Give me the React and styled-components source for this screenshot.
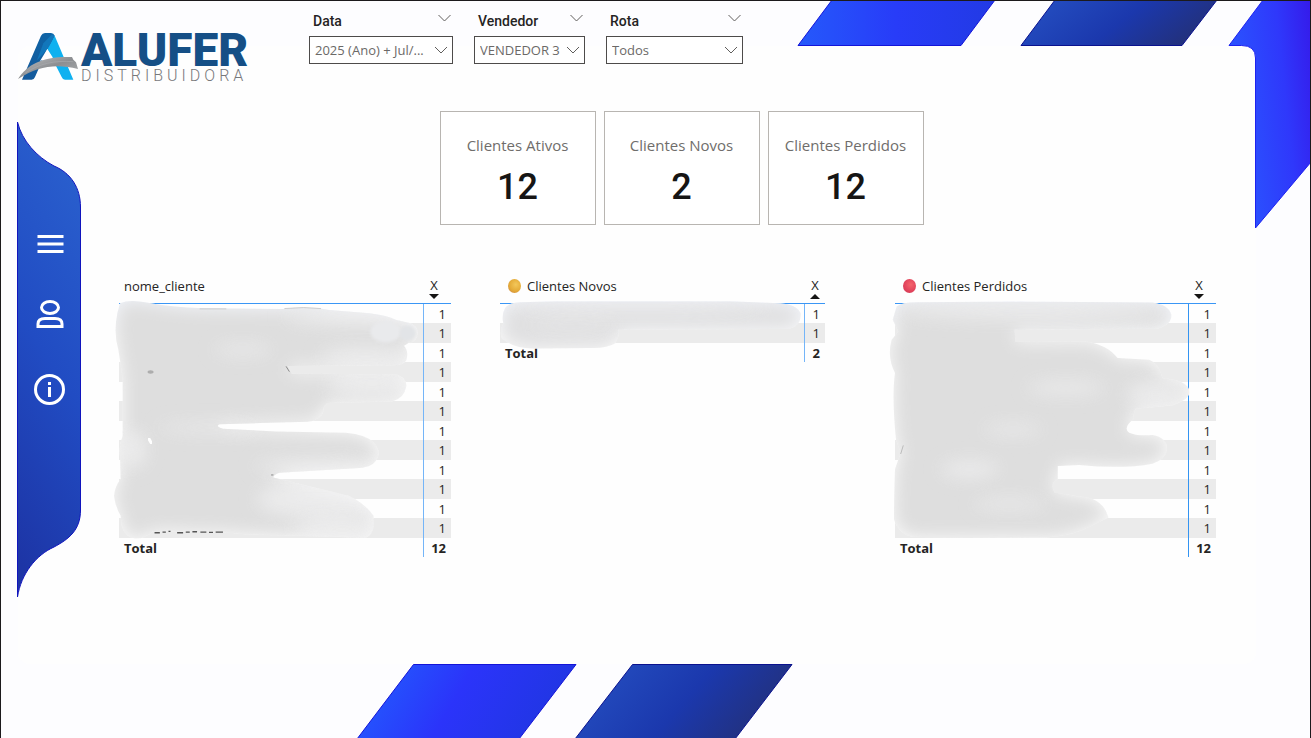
import React from "react";
import styled, { createGlobalStyle } from "styled-components";

const GlobalStyle = createGlobalStyle`
  *, *::before, *::after { box-sizing: border-box; }
  body {
    margin: 0;
    background: #fdfdff;
    color: #252423;
    font-family: "Open Sans", "Noto Sans", sans-serif;
  }
  button { font: inherit; color: inherit; background: none; border: 0; padding: 0; cursor: pointer; }
`;

const Page = styled.div`
  display: grid;
  min-height: 100vh;
  border: 1px solid #1c1a1c;
  border-bottom: 0;
  > * { grid-area: 1 / 1; min-width: 0; }
`;

const Sheet = styled.div`
  margin: 45px 54px 74px 17px;
  border-radius: 12px;
  background: #fefefe;
`;

const Backdrop = styled.div`
  display: flex;
  flex-direction: column;
  justify-content: space-between;
  overflow: hidden;
  svg { display: block; flex: none; }
`;

const TopShapes = styled.svg`
  align-self: flex-end;
`;

const BottomShapes = styled.svg`
  margin-left: 27%;
`;

const Content = styled.div`
  display: flex;
  flex-direction: column;
`;

const Header = styled.header`
  display: flex;
  align-items: flex-start;
  gap: 62px;
  height: 110px;
  padding: 11px 0 0 17px;
`;

const Logo = styled.div`
  display: flex;
  align-items: flex-start;
  width: 229px;
  padding-top: 19px;
  svg { display: block; flex: none; }
`;

const LogoText = styled.div`
  display: flex;
  flex-direction: column;
  margin-left: 1px;
  font-family: Roboto, sans-serif;
`;

const Brand = styled.span`
  color: #154f86;
  font-size: 46px;
  font-weight: 900;
  line-height: 38px;
`;

const BrandSub = styled.span`
  color: #77787b;
  font-size: 16px;
  font-weight: 300;
  line-height: 14px;
  letter-spacing: 4px;
`;

const Filters = styled.div`
  display: flex;
  gap: 21px;
`;

const Filter = styled.div`
  display: flex;
  flex-direction: column;
  gap: 6px;
  width: ${(p) => p.$width}px;
`;

const FilterHead = styled.div`
  display: flex;
  justify-content: space-between;
  height: 18px;
  padding: 0 2px 0 4px;
  button { display: flex; padding-top: 2px; }
`;

const FilterLabel = styled.label`
  font-family: Roboto, sans-serif;
  font-size: 14px;
  font-weight: 500;
  line-height: 18px;
`;

const SelectBox = styled.div`
  display: grid;
  align-items: center;
  > * { grid-area: 1 / 1; }
  svg { justify-self: end; margin-right: 5px; pointer-events: none; }
`;

const Select = styled.select`
  appearance: none;
  width: 100%;
  height: 28px;
  padding: 0 0 0 5px;
  border: 1px solid #4d4b4a;
  border-radius: 0;
  background: #fff;
  color: #6b6967;
  font-family: inherit;
  font-size: 13px;
`;

const Body = styled.div`
  display: flex;
  align-items: flex-start;
`;

const Sidebar = styled.nav`
  display: grid;
  flex: none;
  width: 64px;
  margin: 11px 0 0 16px;
  > * { grid-area: 1 / 1; }
  svg { display: block; }
`;

const SidebarLinks = styled.div`
  display: flex;
  flex-direction: column;
  align-items: center;
  gap: 41px;
  padding: 105px 0 0 2px;
`;

const Main = styled.main`
  flex: 1;
  min-width: 0;
  padding: 0 94px 0 38px;
`;

const Cards = styled.section`
  display: flex;
  justify-content: center;
  gap: 8px;
  padding-left: 28px;
`;

const Card = styled.article`
  display: flex;
  flex-direction: column;
  align-items: center;
  width: 156px;
  height: 114px;
  padding-top: 21px;
  border: 1px solid #b8b5b1;
  background: #fff;
`;

const CardTitle = styled.h2`
  margin: 0;
  color: #6f6d6b;
  font-size: 15px;
  font-weight: 400;
  line-height: 24px;
  white-space: nowrap;
`;

const CardValue = styled.p`
  margin: 10px 0 0;
  color: #161514;
  font-family: Roboto, sans-serif;
  font-size: 36px;
  font-weight: 500;
  line-height: 40px;
`;

const Tables = styled.section`
  display: grid;
  grid-template-columns: 381fr 395fr 321fr;
  align-items: start;
  padding-top: 51px;
`;

const TablePanel = styled.div`
  position: relative;
  max-width: ${(p) => p.$width}px;
`;

const Table = styled.table`
  width: 100%;
  table-layout: fixed;
  border-collapse: separate;
  border-spacing: 0;
  font-size: 13px;
  line-height: 18px;

  tr { height: 19px; }
  tbody tr:nth-child(even) { height: 20px; background: #ebebeb; }
  th, td { padding: 0 5px; text-align: left; font-weight: 400; }
  thead th { height: 28px; border-bottom: 1px solid #3a96f5; vertical-align: top; }
  tbody td:last-child, tfoot td {
    border-left: 1px solid ${(p) => p.$rule};
    text-align: right;
  }
  tfoot th, tfoot td { font-weight: 700; }
`;

const CountCol = styled.col`
  width: ${(p) => p.$width}px;
`;

const HeadLabel = styled.span`
  display: flex;
  align-items: center;
  gap: 6px;
  padding-left: ${(p) => (p.$dot ? 3 : 0)}px;
  line-height: 20px;
  font-size: 13px;
`;

const Dot = styled.i`
  width: 13px;
  height: 14px;
  border-radius: 50%;
  background: radial-gradient(circle at 60% 40%, ${(p) => p.$tones});
`;

const SortButton = styled.button`
  display: flex;
  flex-direction: column;
  align-items: center;
  margin-left: 1px;
  line-height: 18px;
  svg { display: block; }
`;

const Smudge = styled.svg`
  position: absolute;
  inset: 0;
  width: 100%;
  height: 100%;
  overflow: visible;
  pointer-events: none;
`;

function Chevron({ size = 13 }) {
  return (
    <svg width={size} height="8" viewBox="0 0 13 8" fill="none" stroke="#605e5c" aria-hidden="true">
      <path d="M.5 1 6.5 7l6-6" />
    </svg>
  );
}

function LogoMark() {
  return (
    <svg width="62" height="52" viewBox="54 93 186 156" role="img" aria-label="Alufer">
      <defs>
        <linearGradient id="markDark" x1="0" y1="1" x2="1" y2="0">
          <stop offset="0" stopColor="#15599a" />
          <stop offset="1" stopColor="#0d65a8" />
        </linearGradient>
        <linearGradient id="markSwoosh" x1="0" y1="0" x2="1" y2="1">
          <stop offset="0" stopColor="#c3c4c6" />
          <stop offset=".5" stopColor="#8c8e91" />
          <stop offset="1" stopColor="#b1b3b5" />
        </linearGradient>
      </defs>
      <path d="M66 239 123 107q4-8 12-8h18q8 0 11 8l-8 23-14 17-37 84q-3 8-10 8z" fill="url(#markDark)" />
      <path d="m164 107 56 132h-25q-7 0-10-8l-43-84z" fill="#0fb1f0" />
      <path d="m164 107-21 40-32 34 19-51 26-27z" fill="#1277bb" />
      <path d="m142 147-22 36q22-9 39-10z" fill="#fff" />
      <path d="M54 237c29-45 75-69 162-66l4 8 8 8 6 20c-63-16-118-11-180 30z" fill="url(#markSwoosh)" />
      <path d="M76 219c43-29 88-38 144-34" fill="none" stroke="#a9abad" strokeWidth="2" />
    </svg>
  );
}

const filters = [
  { id: "data", label: "Data", value: "2025 (Ano) + Jul/...", width: 144 },
  { id: "vendedor", label: "Vendedor", value: "VENDEDOR 3", width: 111 },
  { id: "rota", label: "Rota", value: "Todos", width: 137 },
];

const cards = [
  { title: "Clientes Ativos", value: 12 },
  { title: "Clientes Novos", value: 2 },
  { title: "Clientes Perdidos", value: 12 },
];

const tables = [
  {
    id: "ativos", title: "nome_cliente", rows: 12, width: 332, count: 28, rule: "#74b5f8", viewBox: "27 18 996 846",
    mask: "M30 100Q60 88 110 98Q180 112 280 115L520 117Q600 108 660 120L780 130Q835 137 860 150L905 160Q928 170 926 192Q926 215 900 219L885 228Q900 245 892 272Q885 288 850 287L535 289L547 312L860 314Q893 322 892 350Q886 385 850 396L655 400Q640 410 643 425Q635 452 595 457L330 464Q315 470 340 478L500 486L710 490Q770 495 795 520Q820 550 800 575Q785 597 740 597L510 610Q490 617 492 625L720 680Q770 705 793 740L793 775Q788 800 770 806L410 796L350 790L130 786Q105 812 75 808Q45 805 35 770L32 740Q15 710 12 680Q15 650 32 630L30 560Q25 530 38 500L38 330Q32 280 25 240Q10 190 22 130Z",
    lights: [[400, 240, 90, 16], [740, 140, 220, 26], [790, 345, 140, 40], [770, 260, 140, 30], [300, 475, 160, 14], [640, 690, 200, 60], [620, 590, 190, 20], [700, 780, 150, 40], [70, 540, 40, 60]],
  },
  {
    id: "novos", title: "Clientes Novos", rows: 2, width: 325, count: 21, rule: "#74b5f8", viewBox: "30 18 975 258", dot: "#f3c75a, #e4ab38 55%, #c98048",
    mask: "M45 115Q55 98 90 97L200 94L720 94L870 100Q920 103 932 130Q934 170 895 177L385 179Q390 200 376 220Q350 236 300 234L130 236Q70 235 35 205Q28 180 40 160Q34 135 45 115Z",
    lights: [[250, 165, 150, 10], [450, 110, 400, 14]],
  },
  {
    id: "perdidos", title: "Clientes Perdidos", rows: 12, width: 321, count: 28, rule: "#3394f2", viewBox: "45 18 963 846", dot: "#f4646c, #e0415a 60%, #c73e56",
    mask: "M50 110Q65 96 120 97L400 95L820 98Q870 105 877 135Q878 165 835 177L405 180L408 217L620 215Q685 225 715 265L810 270Q840 280 850 325L885 330Q930 340 932 368Q930 390 880 408L770 418Q762 430 762 450Q730 475 750 490Q770 500 820 497Q865 505 864 540Q860 570 820 583Q730 600 600 587L535 590L535 630Q510 640 525 670L600 682Q670 685 688 745L610 783Q560 803 500 805L100 804Q55 795 42 750Q42 690 45 600L62 550L48 510Q35 380 45 310Q20 260 35 210L55 185L38 150Z",
    lights: [[450, 125, 400, 24], [560, 355, 120, 20], [400, 480, 90, 16], [270, 600, 90, 26], [390, 705, 110, 16], [830, 375, 90, 40]],
  },
];

function SmudgeCover({ id, viewBox, mask, lights }) {
  return (
    <Smudge viewBox={viewBox} preserveAspectRatio="xMinYMin meet" aria-hidden="true">
      <defs>
        <clipPath id={`clip-${id}`}><path d={mask} /></clipPath>
        <filter id={`soft-${id}`} x="-10%" y="-20%" width="120%" height="140%">
          <feGaussianBlur stdDeviation="26" />
        </filter>
        <filter id={`glow-${id}`} x="-100%" y="-400%" width="300%" height="900%">
          <feGaussianBlur stdDeviation="28" />
        </filter>
        <filter id={`edge-${id}`}><feGaussianBlur stdDeviation="2" /></filter>
        <filter id={`spot-${id}`} x="-50%" y="-50%" width="200%" height="200%"><feGaussianBlur stdDeviation="5" /></filter>
        <linearGradient id={`tone-${id}`} gradientUnits="userSpaceOnUse" x1="0" y1="95" x2="0" y2="200">
          <stop offset="0" stopColor="#f2f5fc" />
          <stop offset="1" stopColor="#fafafa" />
        </linearGradient>
      </defs>
      <g filter={`url(#edge-${id})`}>
        <path d={mask} fill={`url(#tone-${id})`} />
        <g clipPath={`url(#clip-${id})`}>
          <path d={mask} fill={id === "novos" ? "#e0e0e1" : "#dedede"} filter={`url(#soft-${id})`} />
          {lights.map(([cx, cy, rx, ry]) => (
            <ellipse key={`${cx}-${cy}`} cx={cx} cy={cy} rx={rx} ry={ry} fill="#f4f4f5" opacity=".6" filter={`url(#glow-${id})`} />
          ))}
        </g>
      </g>
      {id === "ativos" && (
        <g fill="none" stroke="#bdbdbd" strokeWidth="3">
          <ellipse cx="830" cy="186" rx="46" ry="32" fill="#e9eaec" stroke="none" filter={`url(#spot-${id})`} />
          <ellipse cx="896" cy="190" rx="24" ry="22" fill="#e2e4e7" stroke="none" filter={`url(#spot-${id})`} />
          <path d="M270 117h80M525 116q60-6 110 0" opacity=".7" />
          <path d="m530 290 10 16M485 617h7" stroke="#8b8b8b" />
          <ellipse cx="122" cy="307" rx="9" ry="5" fill="#adadad" stroke="none" filter={`url(#edge-${id})`} />
          <path d="m117 508 8 14" stroke="#fff" strokeWidth="9" strokeLinecap="round" filter={`url(#edge-${id})`} />
          <path d="M134 791h16m8-2h10m8-2h6m20 4h18m8-2h12m8-1h14m10 1h18m8 1h12m8-1h22" stroke="#555" strokeWidth="4" />
        </g>
      )}
      {id === "perdidos" && <path d="m70 528-8 26" stroke="#bbb" strokeWidth="3" />}
    </Smudge>
  );
}

function ClientTable({ table }) {
  const ascending = table.id === "novos";
  return (
    <TablePanel $width={table.width}>
      <Table $rule={table.rule}>
        <colgroup>
          <col />
          <CountCol $width={table.count} />
        </colgroup>
        <thead>
          <tr>
            <th scope="col">
              <HeadLabel $dot={table.dot}>
                {table.dot && <Dot $tones={table.dot} />}
                {table.title}
              </HeadLabel>
            </th>
            <th scope="col">
              <SortButton type="button">
                X
                <svg width="10" height="5" viewBox="0 0 10 5" aria-hidden="true">
                  <path d={ascending ? "M0 5 5 0l5 5z" : "M0 0h10L5 5z"} fill="#161514" />
                </svg>
              </SortButton>
            </th>
          </tr>
        </thead>
        <tbody>
          {Array.from({ length: table.rows }, (_, i) => (
            <tr key={i}><td /><td>1</td></tr>
          ))}
        </tbody>
        <tfoot>
          <tr><th scope="row">Total</th><td>{table.rows}</td></tr>
        </tfoot>
      </Table>
      <SmudgeCover {...table} />
    </TablePanel>
  );
}

function Shapes() {
  return (
    <Backdrop aria-hidden="true">
      <TopShapes width="513" height="229" viewBox="797 1 513 229">
        <defs>
          <linearGradient id="bright"><stop stopColor="#2559fb" /><stop offset=".5" stopColor="#283cf8" /><stop offset="1" stopColor="#223ae4" /></linearGradient>
          <linearGradient id="navy" x1="0" y1="0" x2="1" y2=".3"><stop stopColor="#2652c4" /><stop offset=".6" stopColor="#1b38ad" /><stop offset="1" stopColor="#22317f" /></linearGradient>
          <linearGradient id="ribbon" x1="0" y1=".3" x2="1" y2="0"><stop stopColor="#2a55ff" /><stop offset=".6" stopColor="#2f38fb" /><stop offset="1" stopColor="#351aea" /></linearGradient>
        </defs>
        <path d="M832 0h163l-34 45.500H798z" fill="url(#bright)" stroke="#1414d8" />
        <path d="M1055 0h162l-35 45.500H1021z" fill="url(#navy)" stroke="#0b128e" />
        <path d="M1263 0h48v162l-55.500 66V58q0-12.500-14-12.500H1229z" fill="url(#ribbon)" stroke="#1e22f0" />
      </TopShapes>
      <BottomShapes width="442" height="74" viewBox="354 664 442 74">
        <defs>
          <linearGradient id="bright2" x1="0" y1=".1" x2="1" y2=".3"><stop stopColor="#2260ff" /><stop offset=".5" stopColor="#2b34fa" /><stop offset="1" stopColor="#2036e2" /></linearGradient>
        </defs>
        <path d="M413.500 664.500H576L519 739H357z" fill="url(#bright2)" stroke="#1414d8" />
        <path d="M632.500 664.500H792L735 739H575z" fill="url(#navy)" stroke="#0b128e" />
      </BottomShapes>
    </Backdrop>
  );
}

function SideNav() {
  return (
    <Sidebar aria-label="Principal">
      <svg width="64" height="476" viewBox="0 0 64 476" aria-hidden="true">
        <defs>
          <linearGradient id="side" x1=".6" y1="0" x2=".4" y2="1"><stop stopColor="#2a60ce" /><stop offset=".5" stopColor="#214cc3" /><stop offset="1" stopColor="#1d35a6" /></linearGradient>
        </defs>
        <path d="M.5 0C5 19 20 35 37 44 54 51 63.500 66 63.500 85V388C63.500 408 52 417 37 425 19 433 4 452 .500 475Z" fill="url(#side)" stroke="#1014bd" />
      </svg>
      <SidebarLinks>
        <button type="button" aria-label="Menu">
          <svg width="32" height="32" viewBox="0 0 32 32" fill="none" stroke="#fff" strokeWidth="3">
            <path d="M3.500 9.500h26M3.500 17h26M3.500 24.500h26" />
          </svg>
        </button>
        <button type="button" aria-label="Clientes">
          <svg width="32" height="32" viewBox="0 0 32 32" fill="none" stroke="#fff" strokeWidth="3">
            <ellipse cx="16" cy="7.500" rx="8.500" ry="6" />
            <path d="M4 26.500v-2.500q0-5.500 7-5.500h10q7 0 7 5.500v2.500z" />
          </svg>
        </button>
        <button type="button" aria-label="Informações">
          <svg width="32" height="32" viewBox="0 0 32 32" fill="none" stroke="#fff" strokeWidth="3">
            <circle cx="15.500" cy="16.500" r="14" />
            <path d="M15.500 14v10M15.500 9v3" />
          </svg>
        </button>
      </SidebarLinks>
    </Sidebar>
  );
}

export default function App() {
  return (
    <>
      <GlobalStyle />
      <Page>
        <Sheet />
        <Shapes />
        <Content>
          <Header>
            <Logo>
              <LogoMark />
              <LogoText>
                <Brand>ALUFER</Brand>
                <BrandSub>DISTRIBUIDORA</BrandSub>
              </LogoText>
            </Logo>
            <Filters>
              {filters.map((f) => (
                <Filter key={f.id} $width={f.width}>
                  <FilterHead>
                    <FilterLabel htmlFor={f.id}>{f.label}</FilterLabel>
                    <button type="button" aria-label={`Opções de ${f.label}`}><Chevron /></button>
                  </FilterHead>
                  <SelectBox>
                    <Select id={f.id} defaultValue={f.value}>
                      <option>{f.value}</option>
                    </Select>
                    <Chevron size={14} />
                  </SelectBox>
                </Filter>
              ))}
            </Filters>
          </Header>
          <Body>
            <SideNav />
            <Main>
              <Cards>
                {cards.map((c) => (
                  <Card key={c.title}>
                    <CardTitle>{c.title}</CardTitle>
                    <CardValue>{c.value}</CardValue>
                  </Card>
                ))}
              </Cards>
              <Tables>
                {tables.map((t) => <ClientTable key={t.id} table={t} />)}
              </Tables>
            </Main>
          </Body>
        </Content>
      </Page>
    </>
  );
}
